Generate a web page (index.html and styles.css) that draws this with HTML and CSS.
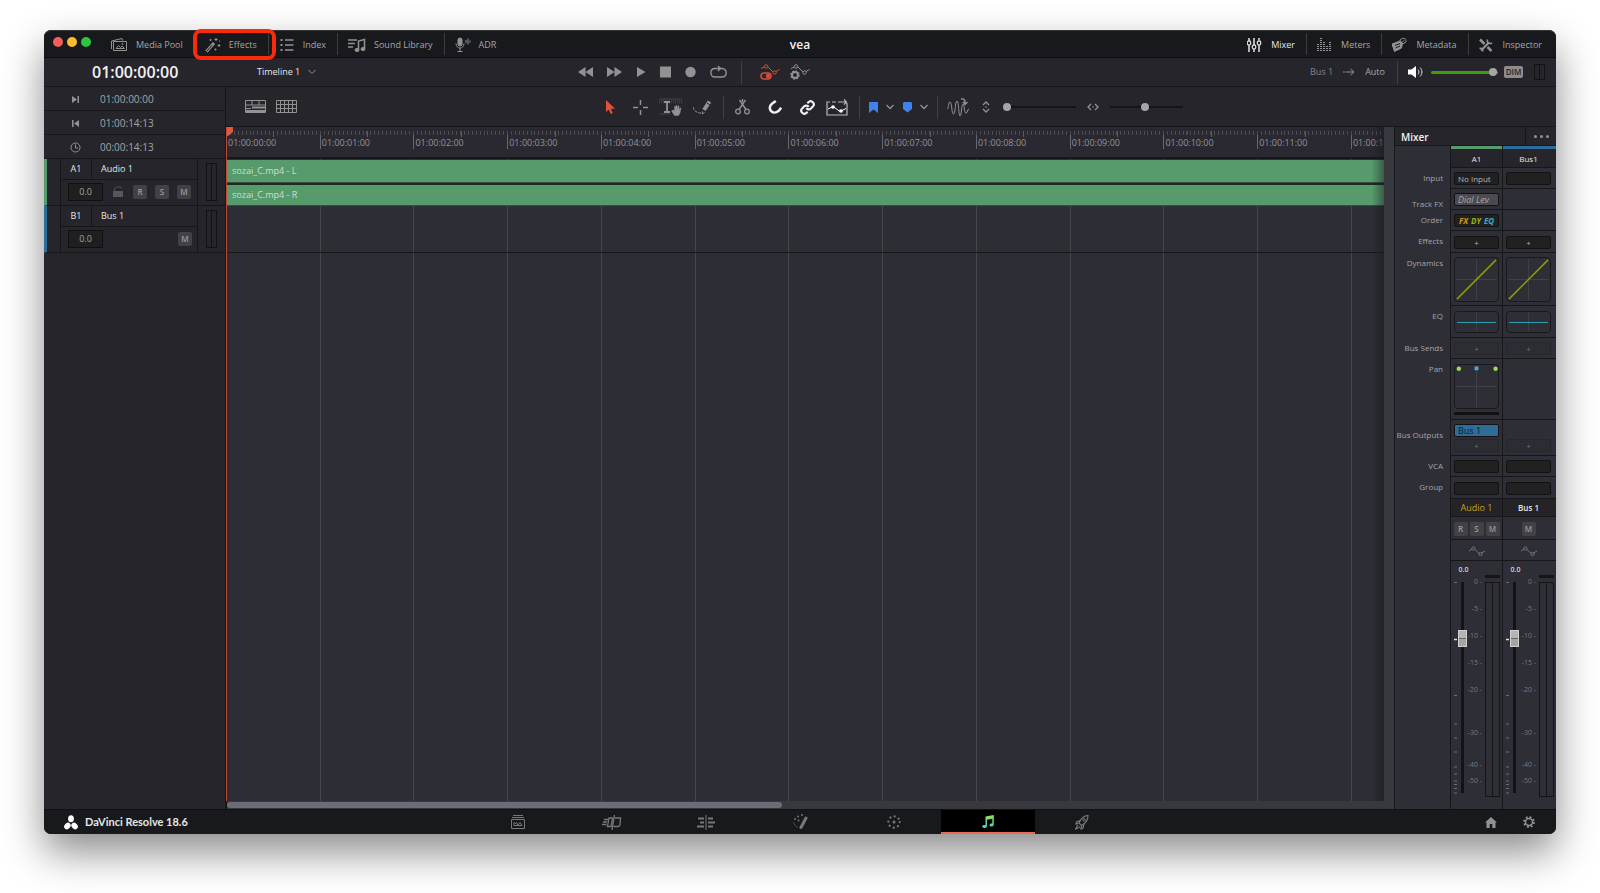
FILE: index.html
```html
<!DOCTYPE html>
<html lang="en">
<head>
    <meta charset="UTF-8">
    <meta name="viewport" content="width=device-width, initial-scale=1.0">
    <title>vea - DaVinci Resolve</title>
    <link rel="stylesheet" href="styles.css">
</head>
<body>
    <div class="window">
        <header class="title-bar">
            <nav class="title-group">
                <div class="traffic-lights">
                    <span class="light light-close"></span>
                    <span class="light light-minimize"></span>
                    <span class="light light-zoom"></span>
                </div>
                <button class="panel-tab">
                    <svg width="18" height="16" viewBox="0 0 18 16" class="line"><path d="M1.5 12V4L12 1.5l.6 2M3.5 4.5h13v9h-13zM6 11.500l2.500-3 2 2 1.500-1.500 2.500 2.500z"/><circle cx="12.500" cy="7" r=".6"/></svg>
                    Media Pool
                </button>
                <button class="panel-tab highlighted">
                    <svg width="16" height="16" viewBox="0 0 16 16" class="line"><path d="M1.500 14.500l7.500-8.500" stroke-width="3"/><path d="M2 14l5-5.700" stroke="#18191c" stroke-width="1"/><path d="M11 1v3M9.500 2.500h3M14 7v3M12.500 8.500h3M5.500 2v2M4.500 3h2M10.500 11.500v2M9.500 12.500h2M14.500 3.500v1"/></svg>
                    Effects
                </button>
                <button class="panel-tab">
                    <svg width="16" height="16" viewBox="0 0 16 16" class="line"><path d="M1.500 3h2M1.500 8h2M1.500 13h2" stroke-width="2"/><path d="M6 3h8.500M6 8h8.500M6 13h8.500" stroke-width="1.300"/></svg>
                    Index
                </button>
                <button class="panel-tab">
                    <svg width="18" height="16" viewBox="0 0 18 16" class="line"><path d="M0 3h9M0 6.500h7M0 10h5" stroke-width="1.300"/><path d="M10.500 12.500V4l6-1.500v9" stroke-width="1.500"/><ellipse cx="9" cy="13" rx="2" ry="1.600" class="solid"/><ellipse cx="15" cy="12" rx="2" ry="1.600" class="solid"/></svg>
                    Sound Library
                </button>
                <button class="panel-tab">
                    <svg width="16" height="16" viewBox="0 0 16 16" class="line"><rect x="3" y="1" width="4" height="8" rx="2" class="solid"/><path d="M1 6.500c0 6 8 6 8 0M5 11v3.500M2.500 14.500h5M11 3v3M13 1.500v6M15 3.500v2"/></svg>
                    ADR
                </button>
            </nav>
            <h1 class="project-name">vea</h1>
            <nav class="title-group title-group-right">
                <button class="panel-tab active">
                    <svg width="16" height="16" viewBox="0 0 16 16" class="line"><path d="M2 1v3M2 8v7M7 1v7M7 12v3M12 1v2.500M12 8v7" stroke-width="1.600"/><rect x=".3" y="4" width="3.400" height="4" rx="1.500" fill="#18191c" stroke-width="1.300"/><rect x="5.300" y="8" width="3.400" height="4" rx="1.500" fill="#18191c" stroke-width="1.300"/><rect x="10.300" y="4" width="3.400" height="4" rx="1.500" fill="#18191c" stroke-width="1.300"/></svg>
                    Mixer
                </button>
                <button class="panel-tab">
                    <svg width="16" height="16" viewBox="0 0 16 16" class="line"><path d="M1 14V7M4 14V1M7 14V5M10 14V8M13 14V4" stroke-width="2" stroke-dasharray="1 1"/></svg>
                    Meters
                </button>
                <button class="panel-tab">
                    <svg width="16" height="16" viewBox="0 0 16 16" class="line"><path d="M0 7l8-3 2.500 2-1 5-7 3.500z" class="solid"/><path d="M3 8.500l5-2M3.500 11l4.500-2" stroke="#18191c"/><path d="M8 4c0-3 6-4 6-.5 0 2.500-2 3-3 3M10 5.500l2-2"/></svg>
                    Metadata
                </button>
                <button class="panel-tab">
                    <svg width="16" height="16" viewBox="0 0 16 16" class="line"><path d="M1 2.500l4.500 4.500M8.500 10l4 4" stroke-width="2.500"/><path d="M2 13.500L10 5.500" stroke-width="2.200"/><path d="M8.500 2.500c-1 3 1.500 5 4.500 3.500M.5 11.500c2-1 4 1 3 3" stroke-width="1.600"/></svg>
                    Inspector
                </button>
            </nav>
        </header>

        <section class="transport">
            <div class="timecode">01:00:00:00</div>
            <div class="timeline-picker">
                <button class="picker-button">Timeline 1
                    <svg width="8" height="6" viewBox="0 0 8 6" class="line"><path d="M.5 1L4 4.500 7.500 1"/></svg>
                </button>
            </div>
            <div class="transport-buttons">
                <button class="icon-button" aria-label="Rewind"><svg width="15" height="12" viewBox="0 0 15 12" class="fill"><path d="M7.500 1v10L0 6zM15 1v10L7.500 6z"/></svg></button>
                <button class="icon-button" aria-label="Fast forward"><svg width="15" height="12" viewBox="0 0 15 12" class="fill"><path d="M0 1v10l7.500-5zM7.500 1v10L15 6z"/></svg></button>
                <button class="icon-button" aria-label="Play"><svg width="10" height="12" viewBox="0 0 10 12" class="fill"><path d="M1 1v10l8.500-5z"/></svg></button>
                <button class="icon-button" aria-label="Stop"><svg width="11" height="12" viewBox="0 0 11 12" class="fill"><path d="M0 .5h11v11H0z"/></svg></button>
                <button class="icon-button" aria-label="Record"><svg width="11" height="12" viewBox="0 0 11 12" class="fill"><circle cx="5.500" cy="6" r="5.200"/></svg></button>
                <button class="icon-button" aria-label="Loop"><svg width="17" height="14" viewBox="0 0 17 14" class="line"><path d="M5 3.500C-.5 3.500-.5 12 5 12h7c5.500 0 5.500-8.500 0-8.500H5M8 1l2.500 2.500L8 6" stroke-width="1.400"/></svg></button>
                <span class="divider"></span>
                <button class="icon-button automation" aria-label="Automation"><svg width="20" height="16" viewBox="0 0 20 16" class="line"><path d="M1 4.500L4 3M8 3l5 5M16 7.500l3.500-2"/><circle cx="6" cy="2.500" r="1.700"/><circle cx="14.500" cy="8.500" r="1.700"/><rect x="1" y="9" width="10" height="6" rx="3" stroke-width="1.500"/><circle cx="8" cy="12" r="1.800" class="solid"/></svg></button>
                <button class="icon-button" aria-label="Automation settings"><svg width="20" height="16" viewBox="0 0 20 16" class="line"><path d="M1 4.500L4 3M8 3l5 5M16 7.500l3.500-2"/><circle cx="6" cy="2.500" r="1.700"/><circle cx="14.500" cy="8.500" r="1.700"/><circle cx="5" cy="11" r="3" stroke-width="2"/><circle cx="5" cy="11" r="4.200" stroke-width="1.200" stroke-dasharray="1.600 1.700"/></svg></button>
            </div>
            <div class="monitor">
                <span class="monitor-bus">Bus 1</span>
                <svg width="12" height="8" viewBox="0 0 12 8" class="line"><path d="M0 4h2M3 4h8M7.500 1L11 4 7.500 7"/></svg>
                <span class="monitor-mode">Auto</span>
                <span class="divider"></span>
                <button class="icon-button mute" aria-label="Mute"><svg width="15" height="12" viewBox="0 0 15 12"><path d="M0 3.500h3.500L8 0v12L3.500 8.500H0z" fill="#fff"/><path d="M10 3.500c1.300 1.500 1.300 3.500 0 5M12 1.500c2.500 2.500 2.500 6.500 0 9" fill="none" stroke="#ddd"/></svg></button>
                <input class="volume" type="range" min="0" max="100" value="98" aria-label="Volume">
                <button class="dim">DIM</button>
                <span class="meter-pair small"></span>
            </div>
        </section>

        <div class="workspace">
            <aside class="track-panel">
                <div class="time-row">
                    <svg width="9" height="9" viewBox="0 0 9 9" class="fill"><path d="M1 1l5 3.500L1 8zM6.500 1h1.500v7H6.500z"/></svg>
                    <span>01:00:00:00</span>
                </div>
                <div class="time-row">
                    <svg width="9" height="9" viewBox="0 0 9 9" class="fill"><path d="M8 1L3 4.500 8 8zM1 1h1.500v7H1z"/></svg>
                    <span>01:00:14:13</span>
                </div>
                <div class="time-row">
                    <svg width="11" height="11" viewBox="0 0 11 11" class="line"><circle cx="5.500" cy="5.500" r="4.500"/><path d="M5.500 2.500v3.500H8"/></svg>
                    <span>00:00:14:13</span>
                </div>

                <div class="track track-audio">
                    <div class="track-main">
                        <div class="track-title"><span class="track-id">A1</span><span class="track-name">Audio 1</span></div>
                        <div class="track-controls">
                            <input class="gain" type="text" value="0.0" aria-label="Audio 1 gain">
                            <button class="icon-button lock" aria-label="Lock track"><svg width="10" height="12" viewBox="0 0 10 12"><path d="M0 5h10v6H0z" fill="#57575a"/><path d="M1.500 5V3.500c0-3 6-3.500 7-1" fill="none" stroke="#57575a"/></svg></button>
                            <button class="key">R</button>
                            <button class="key">S</button>
                            <button class="key">M</button>
                        </div>
                    </div>
                    <span class="meter-pair"></span>
                </div>
                <div class="track track-bus">
                    <div class="track-main">
                        <div class="track-title"><span class="track-id">B1</span><span class="track-name">Bus 1</span></div>
                        <div class="track-controls">
                            <input class="gain" type="text" value="0.0" aria-label="Bus 1 gain">
                            <button class="key key-last">M</button>
                        </div>
                    </div>
                    <span class="meter-pair"></span>
                </div>
            </aside>

            <main class="editor">
                <div class="toolbar">
                    <div class="view-modes">
                        <button class="icon-button" aria-label="Timeline view"><svg width="21" height="13" viewBox="0 0 21 13" class="line"><path d="M.5.5h20v12H.5zM0 5h21M7 .5V5M14 .5V5M0 8.500h6"/><path d="M7 6.500h13v2H7zM1 10h19v2H1z" class="solid" stroke="none"/></svg></button>
                        <button class="icon-button" aria-label="Grid view"><svg width="21" height="13" viewBox="0 0 21 13" class="line"><path d="M.5.5h20v12H.5zM0 4.500h21M0 8.500h21M4.500 0v13M8.500 0v13M12.500 0v13M16.500 0v13"/></svg></button>
                    </div>
                    <div class="tools">
                        <div class="tool-group">
                            <button class="icon-button" aria-label="Pointer"><svg width="10" height="15" viewBox="0 0 10 15"><path d="M1 0v12l2.700-2.500L5.800 14l2-.9L5.800 8.800H10z" fill="#e2523b"/></svg></button>
                            <button class="icon-button wide-gap" aria-label="Range"><svg width="15" height="15" viewBox="0 0 15 15" class="line"><path d="M7.500 0v5M7.500 10v5M0 7.500h5M10 7.500h5" stroke-width="1.500"/></svg></button>
                            <button class="icon-button" aria-label="Edit selection"><svg width="23" height="19" viewBox="0 0 23 19" class="line"><path d="M.5 1h22M.5 16h11" stroke="#444447"/><path d="M0 3.500h23" stroke="#3c3c40" stroke-width="4" stroke-dasharray="1 1"/><path d="M5 4h6M8 4v10M5 14h6" stroke-width="1.800"/><path d="M14 12l1.500 1V8.500h1V12l.5-4.500h1l.3 4.500.7-4h1v4.500l1-2.500h1l-1 5-1.500 2.500h-4L12.500 13z" class="solid" stroke-width=".5"/></svg></button>
                            <button class="icon-button" aria-label="Pencil"><svg width="19" height="16" viewBox="0 0 19 16" class="line"><path d="M0 8c1 4 4 6 8 6" stroke-dasharray="3 1"/><path d="M11 11l5.500-8.500" stroke-width="4"/><path d="M9.500 12.500l-.5 2.500 2.500-1.500"/><path d="M14 4l3 2" stroke="#26252b"/></svg></button>
                            <span class="divider"></span>
                            <button class="icon-button" aria-label="Scissors"><svg width="15" height="16" viewBox="0 0 15 16" class="line"><circle cx="3" cy="12.500" r="2.300" stroke-width="1.300"/><circle cx="12" cy="12.500" r="2.300" stroke-width="1.300"/><path d="M4 10.500L10.500 1M11 10.500L4.500 1M7.500 0v3" stroke-width="1.400"/></svg></button>
                            <button class="icon-button wide-gap on" aria-label="Snapping"><svg width="14" height="14" viewBox="0 0 14 14" class="line"><path d="M7.800 1L4 3.800c-5.500 4.500.5 12 6.500 7.200l2.700-3.300" stroke-width="2.500"/></svg></button>
                            <button class="icon-button wide-gap on" aria-label="Link"><svg width="15" height="15" viewBox="0 0 24 24" class="line"><path d="M10 13a5 5 0 0 0 7.540.540l3-3a5 5 0 0 0-7.070-7.070l-1.720 1.710M14 11a5 5 0 0 0-7.540-.540l-3 3a5 5 0 0 0 7.070 7.070l1.710-1.710" stroke-width="3.400"/></svg></button>
                            <button class="icon-button" aria-label="Automation follows edit"><svg width="22" height="17" viewBox="0 0 22 17" class="line"><path d="M1 4v12h20V4M0 3h4M6 3h4M12 3h8M18 .5L20.500 3 18 5.500" stroke="#bbb" stroke-width="1.200"/><path d="M2 10l5-2.500 7 5 6-3" stroke="#fff"/><circle cx="7" cy="8" r="1.800" fill="#fff" stroke="none"/><circle cx="15" cy="12" r="1.800" fill="#fff" stroke="none"/></svg></button>
                        </div>
                        <div class="tool-group tool-group-tight">
                            <span class="divider"></span>
                            <button class="icon-button" aria-label="Flag"><svg width="9" height="11" viewBox="0 0 9 11"><path d="M0 0h9v11L4.500 7.500 0 11z" fill="#3f82ee"/></svg></button>
                            <button class="icon-button menu-arrow" aria-label="Flag colours"><svg width="8" height="6" viewBox="0 0 8 6" class="line"><path d="M.5 1L4 4.500 7.500 1" stroke-width="1.300"/></svg></button>
                            <button class="icon-button" aria-label="Marker"><svg width="9" height="11" viewBox="0 0 9 11"><path d="M1 0h7l1 1v6L4.500 10.500 0 7V1z" fill="#3f82ee"/></svg></button>
                            <button class="icon-button menu-arrow" aria-label="Marker colours"><svg width="8" height="6" viewBox="0 0 8 6" class="line"><path d="M.5 1L4 4.500 7.500 1" stroke-width="1.300"/></svg></button>
                            <span class="divider"></span>
                            <button class="icon-button" aria-label="Transients"><svg width="22" height="19" viewBox="0 0 22 19" class="line"><path d="M0 11c2 0 1-7 3-7s1.500 12 3.500 12S8 3 10 3s1.500 15 3 15 1.500-12 3-12 1 9 3 9 1-4 3-4"/><path d="M14 1c3-.5 4.500 1 4 5M16 4l2 2.500L20.500 4" stroke-width="1.400"/></svg></button>
                            <svg class="zoom-icon" width="12" height="12" viewBox="0 0 12 12"><path d="M3 4l3-3 3 3M3 8l3 3 3-3" fill="none" stroke="#929292" stroke-width="1.300"/><circle cx="6" cy="6" r=".8" fill="#929292"/></svg>
                            <input class="zoom" type="range" min="0" max="100" value="0" aria-label="Vertical zoom">
                            <svg class="zoom-icon" width="12" height="8" viewBox="0 0 12 8"><path d="M4 1L1 4l3 3M8 1l3 3-3 3" fill="none" stroke="#929292" stroke-width="1.300"/><circle cx="6" cy="4" r=".8" fill="#929292"/></svg>
                            <input class="zoom" type="range" min="0" max="100" value="48" aria-label="Horizontal zoom">
                        </div>
                    </div>
                    <div class="toolbar-end"></div>
                </div>

                <div class="editor-body">
                    <section class="timeline">
                        <div class="canvas">
                            <div class="ruler seconds">
                                <span class="mark">01:00:00:00</span>
                                <span class="mark">01:00:01:00</span>
                                <span class="mark">01:00:02:00</span>
                                <span class="mark">01:00:03:00</span>
                                <span class="mark">01:00:04:00</span>
                                <span class="mark">01:00:05:00</span>
                                <span class="mark">01:00:06:00</span>
                                <span class="mark">01:00:07:00</span>
                                <span class="mark">01:00:08:00</span>
                                <span class="mark">01:00:09:00</span>
                                <span class="mark">01:00:10:00</span>
                                <span class="mark">01:00:11:00</span>
                                <span class="mark mark-short">01:00:1</span>
                            </div>
                            <div class="lanes">
                                <div class="seconds grid-lines">
                                    <i></i><i></i><i></i><i></i><i></i><i></i><i></i><i></i><i></i><i></i><i></i><i></i><i></i>
                                </div>
                                <div class="lane-stack">
                                    <div class="lane">
                                        <div class="clip">sozai_C.mp4 - L</div>
                                        <div class="clip">sozai_C.mp4 - R</div>
                                    </div>
                                    <div class="lane"></div>
                                </div>
                            </div>
                            <div class="playhead"><svg width="6" height="9" viewBox="0 0 6 9"><path d="M0 0h6v5L1 9H0z" fill="#e0593f"/></svg></div>
                        </div>
                        <div class="scrollbar"><div class="scroll-thumb"></div></div>
                    </section>

                    <section class="mixer">
                        <header class="mixer-header">
                            <h2>Mixer</h2>
                            <button class="mixer-menu" aria-label="Mixer options"><i></i><i></i><i></i></button>
                        </header>
                        <div class="mixer-body">
                            <div class="mixer-labels">
                                <span></span>
                                <span>Input</span>
                                <span class="low">Track FX</span>
                                <span>Order</span>
                                <span>Effects</span>
                                <span>Dynamics</span>
                                <span>EQ</span>
                                <span>Bus Sends</span>
                                <span>Pan</span>
                                <span class="low">Bus Outputs</span>
                                <span>VCA</span>
                                <span>Group</span>
                            </div>

                            <div class="strip strip-audio">
                                <div class="cell strip-id">A1</div>
                                <div class="cell"><button class="slot slot-input">No Input</button></div>
                                <div class="cell"><button class="slot slot-fx">Dial Lev</button></div>
                                <div class="cell"><button class="slot slot-order"><span class="fx">FX</span><span class="dy">DY</span><span class="eq">EQ</span></button></div>
                                <div class="cell"><button class="slot">+</button></div>
                                <div class="cell"><svg class="graph" width="45" height="45" viewBox="0 0 45 45"><path d="M22.500 1v43M1 22.500h43" class="axis"/><path d="M2 43L43 2" stroke="#8b9a13" stroke-width="1.600"/></svg></div>
                                <div class="cell"><svg class="graph" width="45" height="22" viewBox="0 0 45 22"><path d="M22.500 1v20" class="axis"/><path d="M1 11.500h43" stroke="#2f9db4" stroke-width="1.200"/></svg></div>
                                <div class="cell"><button class="slot slot-empty">+</button></div>
                                <div class="cell cell-pan">
                                    <svg class="graph" width="45" height="45" viewBox="0 0 45 45"><path d="M22.500 1v43M1 22.500h43" class="axis"/><circle cx="4" cy="4" r="2.300" fill="#a3d65c"/><circle cx="42.500" cy="4" r="2.300" fill="#a3d65c"/><path d="M20.500 1.500h4v4h-4z" fill="#4fa8e0"/></svg>
                                    <span class="pan-bar"></span>
                                </div>
                                <div class="cell"><button class="slot slot-bus">Bus 1</button><button class="slot slot-empty">+</button></div>
                                <div class="cell"><button class="slot" aria-label="VCA"></button></div>
                                <div class="cell"><button class="slot" aria-label="Group"></button></div>
                                <div class="cell strip-name selected">Audio 1</div>
                                <div class="cell cell-keys"><button class="key">R</button><button class="key">S</button><button class="key">M</button></div>
                                <div class="cell"><svg width="16" height="10" viewBox="0 0 16 10" class="line dim-line"><path d="M0 5l3-2M6 3.500l4 4M12.500 7L16 5"/><circle cx="4.500" cy="2.500" r="1.600"/><circle cx="11.500" cy="8" r="1.600"/></svg></div>
                                <div class="fader">
                                    <span class="fader-value">0.0</span>
                                    <div class="fader-body">
                                        <svg class="fader-ticks" width="4" viewBox="0 0 4 215" preserveAspectRatio="none"><path d="M0 .5h4M0 113.500h4M0 142h4M0 156h4M0 170h4M0 185h4M0 192h4M0 199h4M0 202.500h4M0 206.500h4M0 211h4" stroke="#77777c"/><path d="M0 57.500h4" stroke="#ddd" stroke-width="1.500"/></svg>
                                        <input class="fader-slider" type="range" min="0" max="100" value="75" aria-label="Audio 1 level">
                                        <div class="fader-scale"><span>0 -</span><span>-5 -</span><span>-10 -</span><span>-15 -</span><span>-20 -</span><span>-30 -</span><span>-40 -</span><span>-50 -</span></div>
                                        <span class="level-meter"></span>
                                    </div>
                                </div>
                            </div>

                            <div class="strip strip-bus">
                                <div class="cell strip-id">Bus1</div>
                                <div class="cell"><button class="slot" aria-label="Input"></button></div>
                                <div class="cell"></div>
                                <div class="cell"></div>
                                <div class="cell"><button class="slot">+</button></div>
                                <div class="cell"><svg class="graph" width="45" height="45" viewBox="0 0 45 45"><path d="M22.500 1v43M1 22.500h43" class="axis"/><path d="M2 43L43 2" stroke="#8b9a13" stroke-width="1.600"/></svg></div>
                                <div class="cell"><svg class="graph" width="45" height="22" viewBox="0 0 45 22"><path d="M22.500 1v20" class="axis"/><path d="M1 11.500h43" stroke="#2f9db4" stroke-width="1.200"/></svg></div>
                                <div class="cell"><button class="slot slot-empty">+</button></div>
                                <div class="cell"></div>
                                <div class="cell cell-bottom"><button class="slot slot-empty">+</button></div>
                                <div class="cell"><button class="slot" aria-label="VCA"></button></div>
                                <div class="cell"><button class="slot" aria-label="Group"></button></div>
                                <div class="cell strip-name">Bus 1</div>
                                <div class="cell cell-keys"><button class="key">M</button></div>
                                <div class="cell"><svg width="16" height="10" viewBox="0 0 16 10" class="line dim-line"><path d="M0 5l3-2M6 3.500l4 4M12.500 7L16 5"/><circle cx="4.500" cy="2.500" r="1.600"/><circle cx="11.500" cy="8" r="1.600"/></svg></div>
                                <div class="fader">
                                    <span class="fader-value">0.0</span>
                                    <div class="fader-body">
                                        <svg class="fader-ticks" width="4" viewBox="0 0 4 215" preserveAspectRatio="none"><path d="M0 .5h4M0 113.500h4M0 142h4M0 156h4M0 170h4M0 185h4M0 192h4M0 199h4M0 202.500h4M0 206.500h4M0 211h4" stroke="#77777c"/><path d="M0 57.500h4" stroke="#ddd" stroke-width="1.500"/></svg>
                                        <input class="fader-slider" type="range" min="0" max="100" value="75" aria-label="Bus 1 level">
                                        <div class="fader-scale"><span>0 -</span><span>-5 -</span><span>-10 -</span><span>-15 -</span><span>-20 -</span><span>-30 -</span><span>-40 -</span><span>-50 -</span></div>
                                        <span class="level-meter"></span>
                                    </div>
                                </div>
                            </div>
                        </div>
                    </section>
                </div>
            </main>
        </div>

        <footer class="page-bar">
            <div class="brand">
                <svg width="14" height="15" viewBox="0 0 14 15" fill="#fff"><ellipse cx="7" cy="3.700" rx="2.900" ry="3.500"/><ellipse cx="3.400" cy="11" rx="2.900" ry="3.600" transform="rotate(40 3.400 11)"/><ellipse cx="10.600" cy="11" rx="2.900" ry="3.600" transform="rotate(-40 10.600 11)"/></svg>
                DaVinci Resolve 18.6
            </div>
            <nav class="pages">
                <button class="page" aria-label="Media"><svg width="14" height="14" viewBox="0 0 14 14" class="line"><path d="M2 .5h10M1 2.500h12M.5 4.500h13v9H.5zM3 7v3.500h8M4 9l1.500-1.500L7 10l2-2.500 2 3"/></svg></button>
                <button class="page" aria-label="Cut"><svg width="20" height="15" viewBox="0 0 20 15" class="line"><path d="M7 3h3.500L9 11.500H5.500zM13 3h5.500L18 10l-1.500 1.500h-5M12.500 0l-2.500 15M2 4.500h4M1 7h4M0 9.500h4.500" stroke-width="1.300"/></svg></button>
                <button class="page" aria-label="Edit"><svg width="18" height="15" viewBox="0 0 18 15" class="line"><path d="M9 0v15"/><path d="M1 3.500h6M3 7.500h4M0 11.500h7M11 3.500h5M11 7.500h7M11 11.500h5" stroke-width="2"/></svg></button>
                <button class="page" aria-label="Fusion"><svg width="16" height="16" viewBox="0 0 16 16" class="line"><path d="M9 13.500L14 4" stroke-width="3" stroke-linecap="round"/><path d="M6 2.500h.1M10 1h.1M3 5h.1M6.500 6.500h.1" stroke-width="1.800" stroke-linecap="round"/><path d="M1.500 8c.5 2.500 2 4.500 4.500 5.500" stroke="#4a4b4e"/></svg></button>
                <button class="page" aria-label="Color"><svg width="14" height="14" viewBox="0 0 14 14" class="line"><circle cx="7" cy="7" r="5.700" stroke-width="2.200" stroke-linecap="round" stroke-dasharray=".1 4.370"/><circle cx="7" cy="7" r="1.500" class="solid" stroke="none"/></svg></button>
                <button class="page current" aria-label="Fairlight"><svg width="12" height="13" viewBox="0 0 12 13"><defs><linearGradient id="note" x1="0" y1="0" x2="0" y2="1"><stop offset="0" stop-color="#9be04e"/><stop offset="1" stop-color="#45cfc0"/></linearGradient></defs><path d="M3.500 1.500L11.800 0v9.500c0 2.800-4.600 2.500-4.300.5.200-1.300 1.600-1.700 2.800-1.400V3.800L5 4.700V11c0 2.800-5 2.500-4.800.4C.4 10 2.200 9.700 3.500 10z" fill="url(#note)"/></svg></button>
                <button class="page" aria-label="Deliver"><svg width="14" height="15" viewBox="0 0 14 15" class="line"><path d="M4 8c1.500-4 4.500-7 9-7.500 0 4-2 7.500-6.500 10zM5 5.500L1.500 7 1 9l3-1M9 9l-1 4-2 1 .5-3.500M3 10l-2.500 4L5 12" stroke-width="1.200"/><circle cx="9" cy="4.800" r="1.300"/></svg></button>
            </nav>
            <div class="page-actions">
                <button class="icon-button" aria-label="Home"><svg width="12" height="11" viewBox="0 0 12 11" class="fill"><path d="M6 0l6 5.500h-1.500V11H7.300V7H4.700v4H1.500V5.500H0z"/></svg></button>
                <button class="icon-button" aria-label="Settings"><svg width="12" height="12" viewBox="0 0 12 12" class="line"><circle cx="6" cy="6" r="3.500" stroke-width="1.500"/><circle cx="6" cy="6" r="5" stroke-width="1.800" stroke-dasharray="1.900 2.027"/></svg></button>
            </div>
        </footer>
    </div>
</body>
</html>
```
FILE: styles.css
```css
:root {
    --bar: #18191c;
    --panel: #26252b;
    --canvas: #2d2d35;
    --line: #17171a;
    --gutter: #38393f;
    --text: #a5a5a7;
    --bright: #e6e6e6;
    --icon: #929292;
    --audio: #579a6c;
    --bus: #2b6e9c;
    --mixer-rows: 22px 21px 21px 21px 22px 53px 32px 21px 61px 36px 21px 22px 18px 23px 21px 1fr;
}

* {
    box-sizing: border-box;
}

body {
    margin: 0;
    padding: 30px 44px 59px;
    min-height: 100vh;
    display: flex;
    background: #fff;
    color: var(--text);
    font-family: "Open Sans", "Noto Sans", sans-serif;
    font-size: 9px;
    line-height: 12px;
}

h1, h2 {
    margin: 0;
    color: #f2f2f2;
    font-weight: 600;
}

button, input {
    margin: 0;
    padding: 0;
    border: 0;
    background: none;
    color: inherit;
    font: inherit;
}

svg {
    display: block;
    flex: none;
}

.line {
    fill: none;
    stroke: var(--icon);
}

.line .solid,
.fill {
    fill: var(--icon);
}

.window {
    flex: 1;
    min-width: 0;
    display: flex;
    flex-direction: column;
    border-radius: 7px;
    background: var(--panel);
    box-shadow: 0 18px 40px rgba(0, 0, 0, 0.46);
}

.icon-button {
    display: flex;
    align-items: center;
    justify-content: center;
}

.divider {
    width: 1px;
    height: 23px;
    background: #3f3f44;
}

/* Title bar */
.title-bar {
    display: grid;
    grid-template-columns: 1fr auto 1fr;
    align-items: center;
    height: 28px;
    border-top: 1px solid #34363a;
    border-bottom: 1px solid #0c0c0e;
    border-radius: 7px 7px 0 0;
    background: var(--bar);
}

.title-group {
    display: flex;
    align-items: center;
}

.title-group-right {
    justify-content: flex-end;
    padding-right: 3px;
}

.traffic-lights {
    display: flex;
    gap: 4px;
    padding: 0 9px 4px;
}

.light {
    width: 10px;
    height: 10px;
    border-radius: 50%;
}

.light-close { background: #f65e57; }
.light-minimize { background: #fbbc2e; }
.light-zoom { background: #2ac63f; }

.panel-tab {
    position: relative;
    display: flex;
    align-items: center;
    gap: 8px;
    height: 22px;
    padding: 1px 11px 0 10px;
    border-right: 1px solid #3c3d40;
}

.panel-tab:last-child {
    border-right: 0;
}

.panel-tab.active {
    color: var(--bright);
}

.panel-tab.active .line {
    stroke: #d8d8d8;
}

.highlighted::after {
    content: "";
    position: absolute;
    inset: -4px -8px -5px -2px;
    border: 4px solid #fb2a0b;
    border-radius: 8px;
    z-index: 1;
}

.project-name {
    padding-top: 1px;
    font-size: 12px;
}

/* Transport */
.transport {
    display: grid;
    grid-template-columns: 182px 352fr auto 746fr;
    align-items: center;
    height: 29px;
    border-bottom: 1px solid var(--line);
}

.timecode {
    padding-left: 48px;
    color: #f2f2f2;
    font-size: 16px;
    font-weight: 600;
}

.timeline-picker {
    padding-left: 31px;
}

.picker-button {
    display: flex;
    align-items: center;
    gap: 8px;
    color: var(--bright);
}

.transport-buttons {
    display: flex;
    align-items: center;
    gap: 14px;
}

.transport-buttons .automation {
    margin-left: 4px;
}

.transport-buttons .automation + .icon-button {
    margin-left: -4px;
}

.automation .line {
    stroke: #d44f3a;
}

.automation .line .solid {
    fill: #d44f3a;
}

.monitor {
    display: flex;
    align-items: center;
    justify-content: flex-end;
    gap: 10px;
    padding-right: 11px;
}

.monitor-bus {
    color: #858587;
}

.monitor-mode {
    margin-right: 2px;
}

.mute {
    margin-right: -2px;
}

.dim {
    width: 19px;
    height: 12px;
    margin: 0 1px 0 -4px;
    border-radius: 2px;
    background: #8d8d8d;
    color: var(--panel);
    font-size: 8px;
    font-weight: 600;
}

.meter-pair {
    width: 11px;
    height: 38px;
    border: 1px solid #121214;
    background: linear-gradient(to right, transparent 4px, #121214 4px 5px, transparent 5px);
}

.meter-pair.small {
    height: 16px;
}

/* Sliders */
input[type="range"] {
    appearance: none;
    background: none;
}

.volume,
.zoom {
    height: 9px;
}

.volume {
    width: 67px;
}

.zoom {
    width: 73px;
}

.volume::-webkit-slider-runnable-track {
    height: 3px;
    border-radius: 2px;
    background: #3c9e0d;
}

.zoom::-webkit-slider-runnable-track {
    height: 2px;
    background: #151517;
}

.volume::-webkit-slider-thumb,
.zoom::-webkit-slider-thumb {
    appearance: none;
    width: 8px;
    height: 8px;
    margin-top: -3px;
    border-radius: 50%;
    background: #a6a6a6;
}

/* Workspace */
.workspace {
    flex: 1;
    display: grid;
    grid-template-columns: 182px minmax(0, 1fr);
}

.track-panel {
    border-right: 1px solid var(--line);
}

.time-row {
    display: grid;
    grid-template-columns: 13px 1fr;
    justify-items: center;
    align-items: center;
    gap: 18px;
    height: 24px;
    padding: 1px 0 0 25px;
    border-bottom: 1px solid var(--line);
    font-size: 10px;
}

.time-row span {
    justify-self: start;
}

.track {
    display: flex;
    align-items: center;
    gap: 8px;
    height: 47px;
    border-bottom: 1px solid var(--line);
    border-left: 3px solid var(--audio);
}

.track-bus {
    border-left-color: var(--bus);
}

.track-main {
    flex: 1;
    display: grid;
    grid-template-rows: 21px 1fr;
    height: 100%;
    margin-left: 13px;
    border: solid var(--line);
    border-width: 0 1px;
}

.track .meter-pair {
    margin-right: 8px;
}

.track-title {
    display: grid;
    grid-template-columns: 31px 1fr;
    border-bottom: 1px solid var(--line);
    color: var(--bright);
    line-height: 20px;
}

.track-id {
    border-right: 1px solid var(--line);
    text-align: center;
}

.track-name {
    padding-left: 9px;
}

.track-controls {
    display: flex;
    align-items: center;
    gap: 8px;
    padding: 0 5px 2px 7px;
}

.gain {
    width: 35px;
    height: 18px;
    margin-right: 2px;
    border: 1px solid #101012;
    background: #1f1f20;
    text-align: center;
}

.lock {
    margin-right: 2px;
}

.key {
    width: 14px;
    height: 14px;
    border-radius: 2px;
    background: #424246;
    color: #98989a;
    font-size: 8px;
    font-weight: 600;
    line-height: 14px;
}

.key-last {
    margin-left: auto;
}

.editor {
    display: flex;
    flex-direction: column;
    min-width: 0;
}

/* Toolbar */
.toolbar {
    display: flex;
    align-items: center;
    height: 40px;
    border-bottom: 1px solid var(--line);
}

.view-modes,
.toolbar-end {
    flex: 1;
    padding-left: 19px;
}

.view-modes {
    display: flex;
    gap: 10px;
}

.tools,
.tool-group {
    display: flex;
    align-items: center;
    gap: 11px;
}

.tools {
    padding: 1px 0 0 5px;
}

.tool-group-tight {
    gap: 9px;
}

.tools .wide-gap {
    margin-left: 7px;
}

.tools .menu-arrow {
    margin-left: -1px;
}

.on .line {
    stroke: #f0f0f0;
}

.zoom-icon {
    margin: 0 2px;
}

/* Timeline */
.editor-body {
    flex: 1;
    display: flex;
}

.timeline {
    flex: 1;
    display: flex;
    flex-direction: column;
    min-width: 0;
    padding-right: 10px;
    background: var(--gutter);
}

.canvas {
    position: relative;
    flex: 1;
    display: flex;
    flex-direction: column;
    background: var(--canvas);
}

.canvas::after {
    content: "";
    position: absolute;
    inset: 0 0 0 auto;
    width: 12px;
    background: linear-gradient(to right, transparent, rgba(20, 20, 26, 0.45));
}

.seconds {
    display: grid;
    grid-template-columns: repeat(12, minmax(0, 150fr)) minmax(0, 53fr);
}

.ruler {
    height: 32px;
    padding-top: 4px;
    border-bottom: 2px solid var(--line);
    background: #2a2931;
}

.mark {
    position: relative;
    height: 18px;
    padding: 6px 0 0 1px;
    border-left: 1px solid #68686c;
    color: #939396;
    white-space: nowrap;
}

.mark::before,
.mark::after {
    content: "";
    position: absolute;
    top: 0;
    left: -1px;
    right: 0;
    height: 4px;
    background: repeating-linear-gradient(to right, #4c4c51 0 1px, transparent 1px calc(100% / 24));
}

.mark::after {
    left: 50%;
    right: auto;
    width: 1px;
    height: 6px;
    background: #5c5c60;
}

.mark-short::before {
    background: repeating-linear-gradient(to right, #4c4c51 0 1px, transparent 1px calc(100% / 8));
}

.mark-short::after {
    display: none;
}

.lanes {
    flex: 1;
    display: grid;
}

.grid-lines,
.lane-stack {
    grid-area: 1 / 1;
}

.grid-lines i {
    border-left: 1px solid #45454a;
}

.lane {
    display: flex;
    flex-direction: column;
    gap: 2px;
    height: 47px;
    padding: 1px 0 2px;
    border-bottom: 1px solid var(--line);
}

.clip {
    flex: 1;
    padding-left: 6px;
    border-bottom: 1px solid #34503f;
    background: var(--audio);
    color: #cbe0d0;
    line-height: 22px;
}

.clip + .clip {
    box-shadow: 0 -2px 0 #1d2a23;
    line-height: 20px;
}

.playhead {
    position: absolute;
    top: 0;
    bottom: 0;
    left: 0;
    border-left: 1px solid #c24a35;
}

.scrollbar {
    height: 8px;
    padding: 1px 0;
    border-left: 1px solid var(--line);
}

.scroll-thumb {
    width: 48%;
    height: 6px;
    border-radius: 3px;
    background: #696d76;
}

/* Mixer */
.mixer {
    flex: 0 0 162px;
    display: flex;
    flex-direction: column;
    border-left: 1px solid var(--line);
    background: #2e2e37;
}

.mixer-header {
    display: flex;
    justify-content: space-between;
    height: 19px;
    padding-left: 6px;
    border-bottom: 1px solid var(--line);
    background: var(--panel);
}

.mixer-header h2 {
    font-size: 10px;
    line-height: 20px;
}

.mixer-menu {
    display: flex;
    align-items: center;
    justify-content: center;
    gap: 3px;
    width: 31px;
    border-left: 1px solid var(--line);
}

.mixer-menu i {
    width: 3px;
    height: 3px;
    border-radius: 50%;
    background: var(--icon);
}

.mixer-body {
    flex: 1;
    display: grid;
    grid-template-columns: 55px 52px 1fr;
    font-size: 8px;
}

.mixer-labels,
.strip {
    display: grid;
    grid-template-rows: var(--mixer-rows);
}

.mixer-labels {
    padding-right: 7px;
    text-align: right;
    white-space: nowrap;
}

.mixer-labels span {
    padding-top: 4px;
}

.mixer-labels .low {
    padding-top: 9px;
}

.strip {
    border-left: 1px solid var(--line);
}

.cell {
    display: flex;
    flex-direction: column;
    align-items: center;
    justify-content: center;
    gap: 2px;
    padding-top: 1px;
    border-bottom: 1px solid var(--line);
}

.strip-bus .cell {
    padding-right: 2px;
}

.cell-pan {
    gap: 3px;
}

.cell-bottom {
    justify-content: flex-end;
    padding-bottom: 3px;
}

.cell-keys {
    flex-direction: row;
}

.strip-id {
    border-top: 3px solid var(--audio);
    background: var(--panel);
    color: var(--bright);
}

.strip-bus .strip-id {
    border-top-color: var(--bus);
}

.strip-name {
    background: #232328;
    color: var(--bright);
    font-weight: 600;
}

.strip-name.selected {
    color: #c6a31a;
    font-size: 9px;
    font-weight: 400;
}

.slot {
    flex: none;
    width: 45px;
    height: 13px;
    border: 1px solid #121214;
    border-radius: 2px;
    background: #212122;
    color: #b4b4b6;
    line-height: 11px;
    white-space: nowrap;
}

.slot-input,
.slot-fx,
.slot-bus {
    padding-left: 3px;
    text-align: left;
}

.slot-fx {
    background: #4a4a50;
    color: #a8a8ac;
    font-size: 9px;
    font-style: italic;
}

.slot-order {
    display: flex;
    align-items: center;
    justify-content: center;
    gap: 3px;
    font-style: italic;
    font-weight: 700;
}

.fx { color: #d09b1a; }
.dy { color: #9bb21c; }
.eq { color: #35b0cc; }

.slot-empty {
    border-color: #26262c;
    background: #2c2c33;
    color: #707074;
}

.slot-bus {
    background: #2f6c98;
    color: #0b1a26;
    font-size: 9px;
}

.graph {
    border: 1px solid #19191d;
    border-radius: 4px;
    fill: none;
}

.axis {
    stroke: #414148;
}

.pan-bar {
    width: 45px;
    height: 3px;
    background: #121214;
}

.dim-line {
    stroke: #77777a;
}

/* Faders */
.fader {
    display: flex;
    flex-direction: column;
    padding: 3px 2px 12px 3px;
}

.fader-value {
    width: 19px;
    color: #d4d4d4;
    font-size: 7px;
    font-weight: 600;
    text-align: center;
}

.fader-body {
    flex: 1;
    display: grid;
    grid-template-columns: 4px 9px 1fr 15px;
    margin-top: 6px;
}

.fader-ticks {
    width: 3px;
    height: 100%;
}

.fader-slider {
    writing-mode: vertical-lr;
    direction: rtl;
    width: 9px;
    height: 98%;
}

.fader-slider::-webkit-slider-runnable-track {
    width: 3px;
    height: 100%;
    margin: 0 auto;
    background: #131315;
}

.fader-slider::-webkit-slider-thumb {
    appearance: none;
    width: 9px;
    height: 17px;
    margin-left: -3px;
    border: 1px solid #d0d0d0;
    background: linear-gradient(#b4b4b2 7px, #666 7px 8px, #a5a5a3 8px);
}

.fader-scale {
    display: grid;
    grid-template-rows: 27fr 27fr 27fr 27fr 43fr 32fr 16fr 16fr;
    margin: -5px 0 5px;
    padding-right: 3px;
    color: #77777c;
    font-size: 7px;
    line-height: 10px;
    text-align: right;
    white-space: nowrap;
}

.fader-scale span {
    min-height: 0;
}

.level-meter {
    position: relative;
    border: 1px solid #151518;
    background: linear-gradient(to right, transparent 6px, #151518 6px 7px, transparent 7px);
}

/* peak lamps above the meter */
.level-meter::before {
    content: "";
    position: absolute;
    top: -8px;
    left: -1px;
    right: -1px;
    height: 3px;
    background: #151518;
}

/* Page bar */
.page-bar {
    display: grid;
    grid-template-columns: 1fr auto 1fr;
    height: 25px;
    border-top: 1px solid #101113;
    border-radius: 0 0 7px 7px;
    background: var(--bar);
}

.brand {
    display: flex;
    align-items: center;
    gap: 7px;
    padding-left: 20px;
    color: var(--bright);
    font-family: Lato, sans-serif;
    font-size: 11px;
    font-weight: 700;
}

.pages {
    display: flex;
}

.page {
    display: flex;
    align-items: center;
    justify-content: center;
    width: 94px;
}

.page .line {
    stroke: #77787a;
}

.page .line .solid {
    fill: #77787a;
}

.page.current {
    border-bottom: 2px solid #ee6a55;
    background: #000;
}

.page-actions {
    display: flex;
    justify-content: flex-end;
    gap: 26px;
    padding-right: 21px;
}
```
